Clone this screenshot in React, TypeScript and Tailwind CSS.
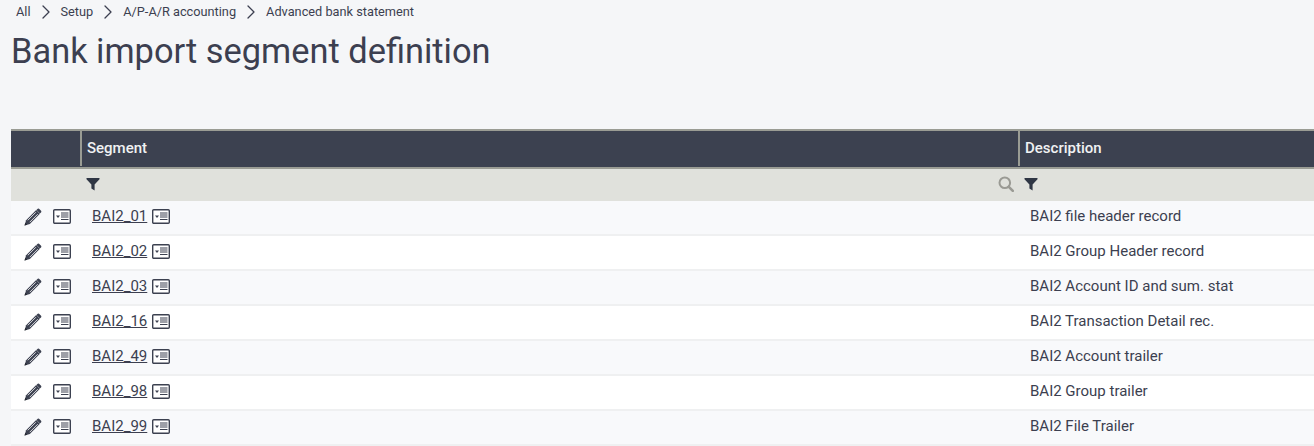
import { ChevronRight } from "lucide-react";

const rows = [
  { code: "BAI2_01", desc: "BAI2 file header record" },
  { code: "BAI2_02", desc: "BAI2 Group Header record" },
  { code: "BAI2_03", desc: "BAI2 Account ID and sum. stat" },
  { code: "BAI2_16", desc: "BAI2 Transaction Detail rec." },
  { code: "BAI2_49", desc: "BAI2 Account trailer" },
  { code: "BAI2_98", desc: "BAI2 Group trailer" },
  { code: "BAI2_99", desc: "BAI2 File Trailer" },
];

const crumbs = ["All", "Setup", "A/P-A/R accounting", "Advanced bank statement"];

function FilterIcon() {
  return (
    <svg width="14" height="14" viewBox="0 0 14 14" className="block">
      <path d="M0.5 1h13v1.2L8.6 7.4V13.5L5.4 11.6V7.4L0.5 2.2z" fill="#2f3644" />
    </svg>
  );
}

function SearchIcon() {
  return (
    <svg width="16" height="16" viewBox="0 0 16 16" className="block" fill="none" stroke="#9a9a94">
      <circle cx="6.8" cy="6.8" r="5.3" strokeWidth="2" />
      <path d="M10.8 10.8L14.8 14.8" strokeWidth="2.6" strokeLinecap="round" />
    </svg>
  );
}

function PencilIcon() {
  return (
    <svg width="18" height="18" viewBox="0 0 17 17" className="block">
      <path d="M0.5 16.5L2 11.5L11.5 2L15 5.5L5.5 15z" fill="#3c4150" />
      <path d="M12.4 1.2C13.2.4 14 .4 14.7 1.1L15.9 2.3C16.6 3 16.6 3.8 15.8 4.6L15 5.2L11.8 2z" fill="#3c4150" />
      <path d="M3.6 11.6L11.2 4M5.4 13.4L13 5.8" stroke="#f5f6f8" strokeWidth="0.8" />
      <path d="M0.5 16.5L1.2 14L3 15.8z" fill="#23262f" />
    </svg>
  );
}

function RecordIcon() {
  return (
    <svg width="18" height="15" viewBox="0 0 18 15" className="block" fill="none">
      <rect x="0.7" y="0.7" width="16.6" height="13.6" rx="1" fill="#ffffff" stroke="#3c4150" strokeWidth="1.4" />
      <path d="M3 6.5h4L5 9z" fill="#3c4150" />
      <path d="M8 4h7.5M8 6h7.5M8 8h7.5M8 10.5h7.5" stroke="#3c4150" />
    </svg>
  );
}

export default function App() {
  return (
    <div className="h-[446px] w-[1314px] overflow-hidden bg-[#f5f6f8] font-['Roboto',sans-serif] text-[#3c3f50]">
      <div className="flex h-[23px] items-center pl-4 text-[12.75px]">
        {crumbs.map((c, i) => (
          <div key={c} className="flex items-center">
            {i > 0 && <ChevronRight size={24} strokeWidth={1.3} className="mx-[3px] text-[#3c3f50]" />}
            <span>{c}</span>
          </div>
        ))}
      </div>

      <h1 className="h-[106px] pl-[11px] pt-[7px] text-[34.4px] leading-[42px] font-normal">
        Bank import segment definition
      </h1>

      <div className="ml-[11px]">
        <div className="flex h-[40px] border-y-2 border-[#9a9c94] bg-[#3c4150] pb-[1px] text-[15px] font-medium text-[#f0f1f3]">
          <div className="w-[71px] border-r-2 border-[#9a9c94]" />
          <div className="flex w-[938px] items-center border-r-2 border-[#9a9c94] pl-[5px]">Segment</div>
          <div className="flex flex-1 items-center pl-[5px]">Description</div>
        </div>

        <div className="flex h-[32px] items-center bg-[#e0e1dc] pb-[3px]">
          <div className="w-[75px] shrink-0" />
          <FilterIcon />
          <div className="flex w-[924px] shrink-0 justify-end pr-[10px]">
            <SearchIcon />
          </div>
          <FilterIcon />
        </div>

        {rows.map((r, i) => (
          <div
            key={r.code}
            className={`flex h-[35px] items-center border-b-2 border-[#eff0f1] pb-[2px] text-[15px] ${i % 2 === 0 ? "bg-[#f8f9fb]" : "bg-white"}`}
          >
            <div className="flex w-[81px] shrink-0 items-center gap-[11px] pl-[13px]">
              <PencilIcon />
              <RecordIcon />
            </div>
            <div className="flex w-[938px] shrink-0 items-center gap-[5px]">
              <span className="underline">{r.code}</span>
              <RecordIcon />
            </div>
            <div>{r.desc}</div>
          </div>
        ))}
      </div>
    </div>
  );
}
